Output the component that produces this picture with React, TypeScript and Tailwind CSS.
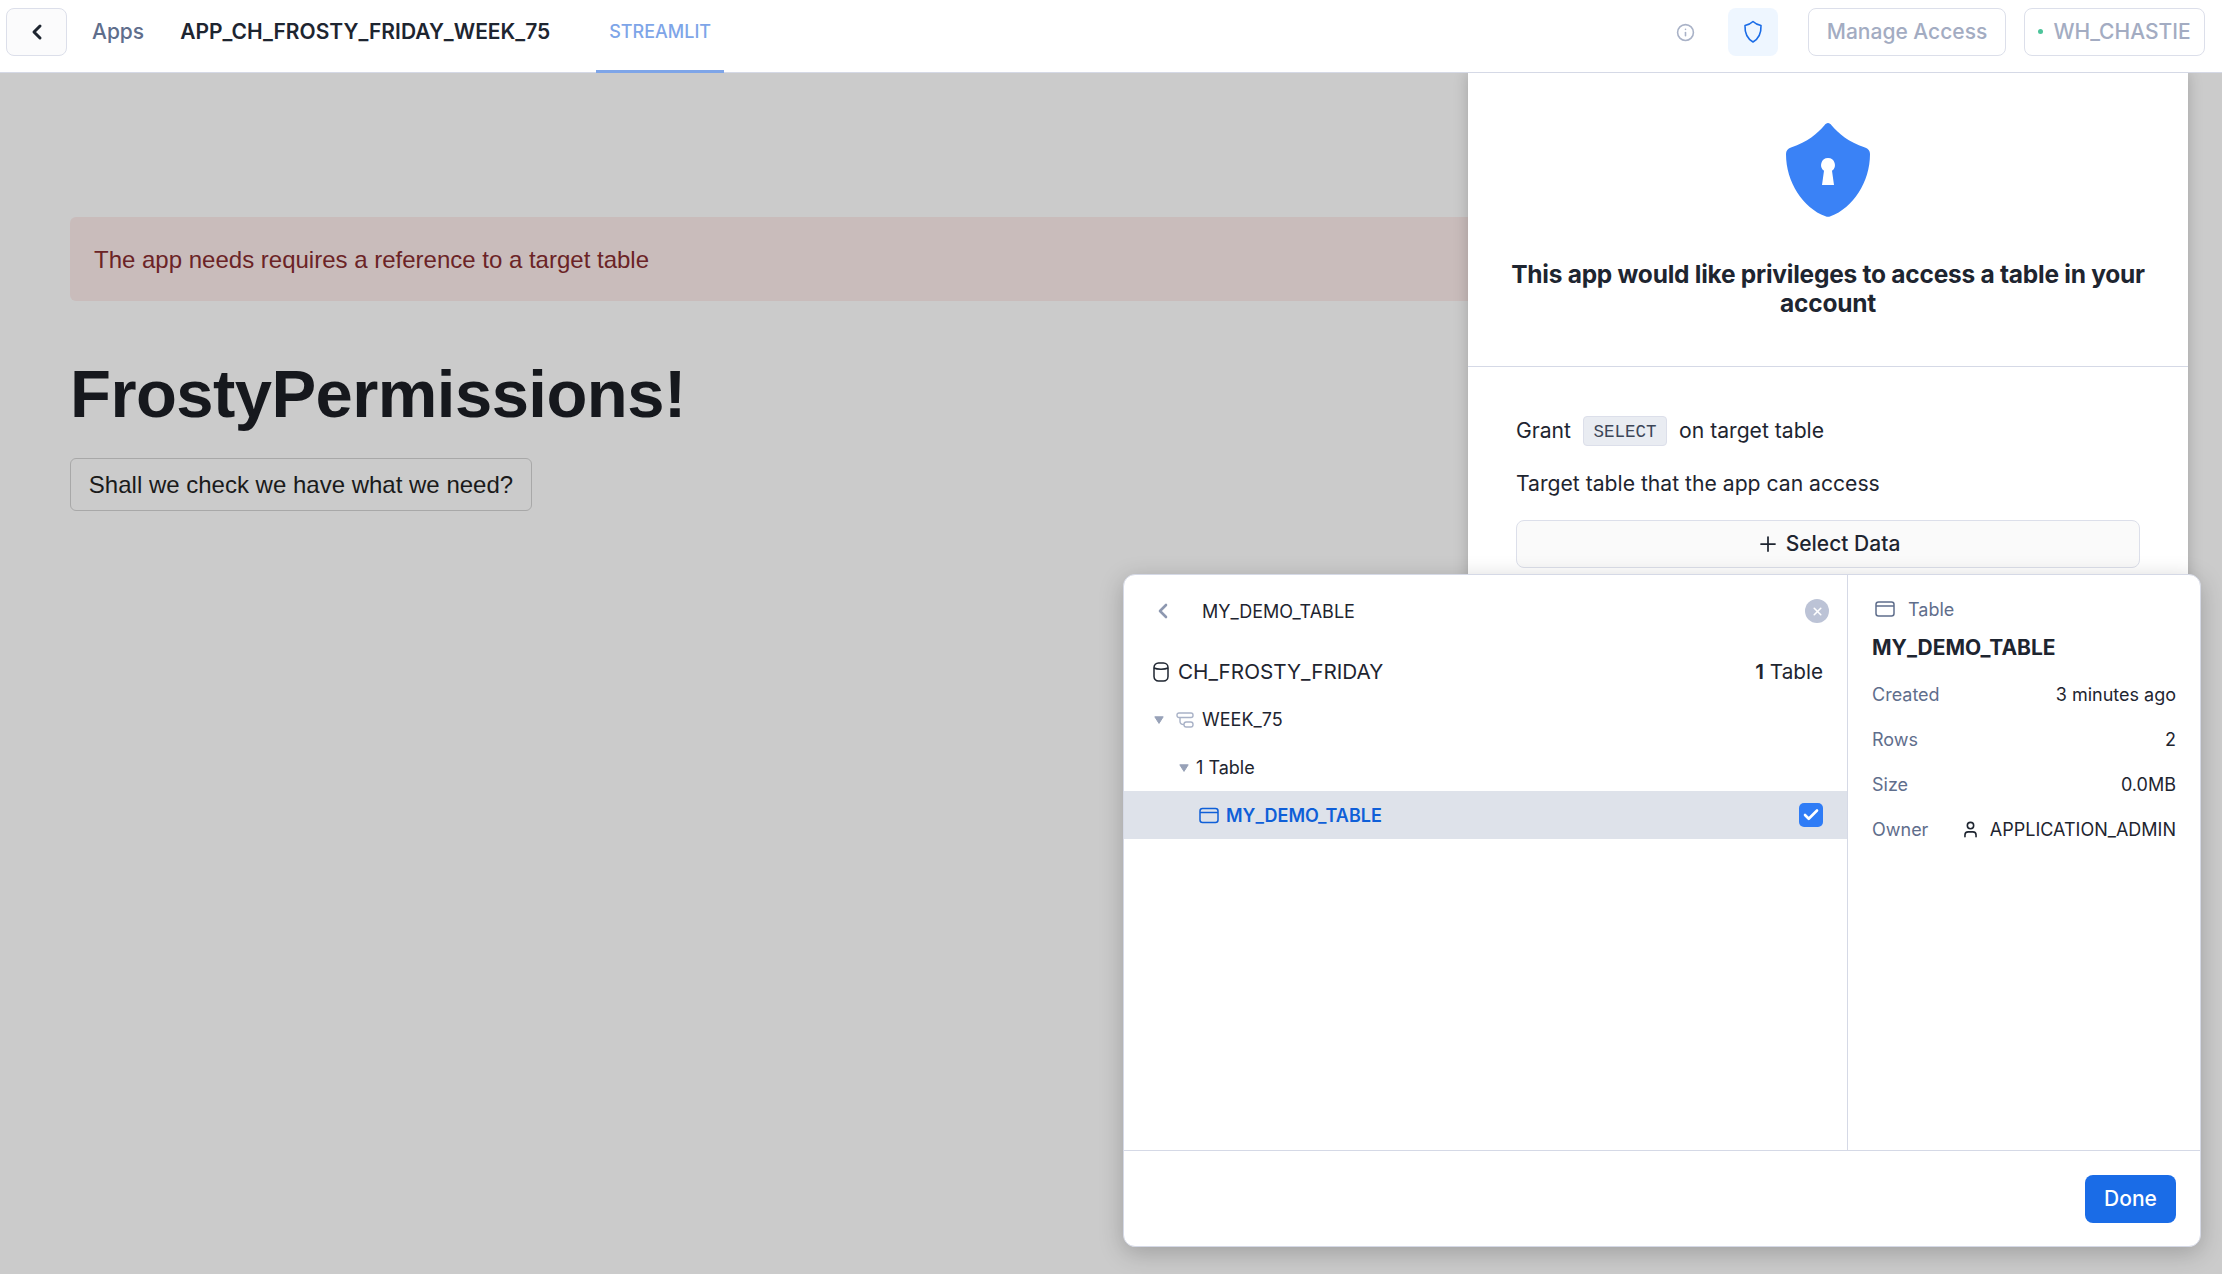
import { Check, ChevronLeft, Info, Plus, User, X } from "lucide-react";

// table glyph used in the tree and the detail pane
const TableIcon = ({ className }: { className: string }) => (
  <svg viewBox="0 0 20 16" fill="none" stroke="currentColor" strokeWidth="1.5" className={className}>
    <rect x="1" y="1" width="18" height="14" rx="2.5" />
    <path d="M1 5h18" />
  </svg>
);

const Caret = () => (
  <svg viewBox="0 0 10 8" className="h-[8px] w-[10px] text-[#98a2b8]" fill="currentColor">
    <path d="M.8.8h8.400L5 7.400z" stroke="currentColor" strokeWidth="1" strokeLinejoin="round" />
  </svg>
);

const details = [
  { label: "Created", value: "3 minutes ago" },
  { label: "Rows", value: "2" },
  { label: "Size", value: "0.0MB" },
];

export default function App() {
  return (
    <div className="relative h-[1274px] overflow-hidden bg-[#cbcbcb] font-['Inter',sans-serif]">
      {/* top bar */}
      <header className="relative z-20 flex h-[73px] items-start border-b border-[#d5d9e6] bg-white pl-[6px] pt-[8px]">
        <button className="flex h-[48px] w-[61px] items-center justify-center rounded-lg border border-[#dcdfea] bg-[#fbfbfc] text-[#1e2530]">
          <ChevronLeft size={24} strokeWidth={3} />
        </button>
        <span className="ml-[25px] flex h-[47px] items-center text-[21px] font-medium text-[#5f6e8c]">Apps</span>
        <span className="ml-[36px] flex h-[47px] w-[416px] items-center text-[21px] font-semibold text-[#1e2530]">
          APP_CH_FROSTY_FRIDAY_WEEK_75
        </span>
        <div className="flex h-[65px] w-[128px] items-center justify-center border-b-[3px] border-[#7ea5e8] pb-[15px] text-[18px] font-medium text-[#7ea5e8]">
          STREAMLIT
        </div>
        <div className="ml-auto flex items-center pr-[17px]">
          <Info size={19} className="text-[#a9b2c7]" />
          <button className="ml-[33px] flex h-[48px] w-[50px] items-center justify-center rounded-lg bg-[#eef6ff] text-[#1a6ce7]">
            <svg viewBox="0 0 20 24" width="20" height="24" fill="none" stroke="currentColor" strokeWidth="1.6">
              <path d="M10 1.500c2 2 4.500 3.200 8 4 .3 7-2 13-8 16.500C4 18.500 1.700 12.500 2 5.500c3.500-.8 6-2 8-4z" strokeLinejoin="round" />
            </svg>
          </button>
          <button className="ml-[30px] flex h-[48px] w-[198px] items-center justify-center rounded-lg border border-[#dcdfea] pb-[1px] text-[21px] font-medium text-[#a3acc2]">
            Manage Access
          </button>
          <button className="ml-[18px] flex h-[48px] w-[181px] items-center justify-center gap-[10px] rounded-lg border border-[#dcdfea] pb-[1px] text-[21px] font-medium text-[#a3acc2]">
            <span className="h-[5px] w-[5px] rounded-full bg-[#4cc49a]" />
            WH_CHASTIE
          </button>
        </div>
      </header>

      {/* streamlit app content */}
      <main className="px-[70px] pt-[144px] font-['Liberation_Sans',sans-serif]">
        <div className="flex h-[84px] items-center rounded-md bg-[#c9bcbb] pl-[24px] pt-[1px] text-[24px] text-[#6b2326]">
          The app needs requires a reference to a target table
        </div>
        <h1 className="mt-[52px] text-[67px] font-bold leading-[82px] tracking-[-0.55px] text-[#16181d]">FrostyPermissions!</h1>
        <button className="mt-[23px] flex h-[53px] w-[462px] items-center justify-center rounded-md border border-[#a8a8a8] text-[24px] text-[#1a1a1a]">
          Shall we check we have what we need?
        </button>
      </main>

      {/* privileges drawer */}
      <aside className="absolute left-[1468px] top-[73px] z-10 h-[1100px] w-[720px] bg-white shadow-[0_0_14px_rgba(0,0,0,0.2)]">
        <div className="flex h-[294px] flex-col items-center border-b border-[#d5d9e6] pt-[50px]">
          <svg viewBox="0 0 84 94" className="h-[94px] w-[84px]">
            <path
              d="M42 0c1.500 0 2.500 1 3.500 2.200C53 11 62 18.500 79 24.500c3.200 1.200 5 3 5 6.500 0 28-17 54-39.500 62.300-1.700.7-3.300.7-5 0C17 85 0 59 0 31c0-3.500 1.800-5.300 5-6.500C22 18.500 31 11 38.500 2.200 39.500 1 40.500 0 42 0z"
              fill="#3a82f6"
            />
            <path d="M42 35a7 7 0 0 1 4 12.700l2 14.300h-12l2-14.300A7 7 0 0 1 42 35z" fill="#fff" />
          </svg>
          <h2 className="mt-[43px] w-[680px] text-center text-[24.5px] font-bold leading-[29px] tracking-[-0.25px] text-[#1e2530]">
            This app would like privileges to access a table in your account
          </h2>
        </div>
        <div className="px-[48px] text-[21.15px] text-[#1e2530]">
          <div className="mt-[49px] flex h-[30px] items-center">
            Grant
            <span className="ml-[12px] mr-[12px] flex h-[30px] w-[84px] items-center justify-center rounded-[4px] border border-[#dcdfea] bg-[#e9ecf2] pt-[3px] font-['Liberation_Mono',monospace] text-[17.5px] text-[#3c4557]">
              SELECT
            </span>
            on target table
          </div>
          <div className="mt-[23px] h-[30px] leading-[30px]">Target table that the app can access</div>
          <button className="mt-[21px] flex h-[48px] w-full items-center justify-center gap-[6px] rounded-lg border border-[#dcdfea] bg-[#fafafa] text-[21px] font-medium">
            <Plus size={24} strokeWidth={1.75} />
            Select Data
          </button>
        </div>
      </aside>

      {/* data picker */}
      <section className="absolute left-[1123px] top-[574px] z-30 flex h-[673px] w-[1078px] flex-col rounded-xl border border-[#d5d9e6] bg-white shadow-[0_6px_24px_rgba(0,0,0,0.22)]">
        <div className="flex min-h-0 flex-1 border-b border-[#d5d9e6]">
          <div className="w-[724px] border-r border-[#d5d9e6] text-[#1e2530]">
            <div className="flex h-[73px] items-center pb-[1px] pl-[27px] pr-[18px] text-[18px]">
              <ChevronLeft size={24} strokeWidth={2.6} className="text-[#8d98b0]" />
              <span className="ml-[27px]">MY_DEMO_TABLE</span>
              <span className="ml-auto flex h-[24px] w-[24px] items-center justify-center rounded-full bg-[#bcc3d6] text-white">
                <X size={13} strokeWidth={3} />
              </span>
            </div>
            <div className="flex h-[48px] items-center pl-[29px] pr-[24px] text-[20.7px]">
              <svg viewBox="0 0 16 20" fill="none" stroke="currentColor" strokeWidth="1.5" className="h-[20px] w-[16px]">
                <rect x="1" y="1" width="14" height="18" rx="4.500" />
                <path d="M1 6c3 1.500 11 1.500 14 0" />
              </svg>
              <span className="ml-[9px]">CH_FROSTY_FRIDAY</span>
              <span className="ml-auto">
                <span className="font-semibold">1</span> Table
              </span>
            </div>
            <div className="flex h-[47px] items-center pl-[30px] text-[18px]">
              <Caret />
              <svg viewBox="0 0 18 16" fill="none" stroke="#a9b2c7" strokeWidth="1.4" className="ml-[12px] h-[16px] w-[18px]">
                <rect x="1" y="1" width="16" height="4.500" rx="2" />
                <rect x="8" y="10" width="9" height="5" rx="2.200" />
                <path d="M4 5.500v4c0 2 1 3 4 3" />
              </svg>
              <span className="ml-[8px]">WEEK_75</span>
            </div>
            <div className="flex h-[48px] items-center pl-[55px] pt-[1px] text-[18px]">
              <Caret />
              <span className="ml-[7px]">1 Table</span>
            </div>
            <div className="flex h-[48px] items-center bg-[#dee2ea] pl-[75px] pr-[24px] text-[18px] font-semibold text-[#0f5fd8]">
              <TableIcon className="h-[17px] w-[20px]" />
              <span className="ml-[7px]">MY_DEMO_TABLE</span>
              <span className="ml-auto flex h-[24px] w-[24px] items-center justify-center rounded-[5px] bg-[#2f7cf6] text-white">
                <Check size={18} strokeWidth={3.5} />
              </span>
            </div>
          </div>
          <div className="flex-1 pl-[24px] pr-[24px] pt-[18px] text-[18px] text-[#1e2530]">
            <div className="flex h-[32px] items-center pl-[3px] text-[#5f6e8c]">
              <TableIcon className="h-[16px] w-[20px]" />
              <span className="ml-[13px]">Table</span>
            </div>
            <div className="mb-[1px] flex h-[46px] items-center text-[21px] font-bold">MY_DEMO_TABLE</div>
            {details.map((row) => (
              <div key={row.label} className="flex h-[45px] items-center justify-between">
                <span className="text-[#5f6e8c]">{row.label}</span>
                <span>{row.value}</span>
              </div>
            ))}
            <div className="flex h-[45px] items-center justify-between">
              <span className="text-[#5f6e8c]">Owner</span>
              <span className="flex items-center gap-[10px]">
                <User size={19} strokeWidth={2} />
                APPLICATION_ADMIN
              </span>
            </div>
          </div>
        </div>
        <div className="flex h-[95px] items-center justify-end pr-[24px]">
          <button className="h-[48px] w-[91px] rounded-lg bg-[#1a6ce7] text-[21px] font-medium text-white">Done</button>
        </div>
      </section>
    </div>
  );
}
